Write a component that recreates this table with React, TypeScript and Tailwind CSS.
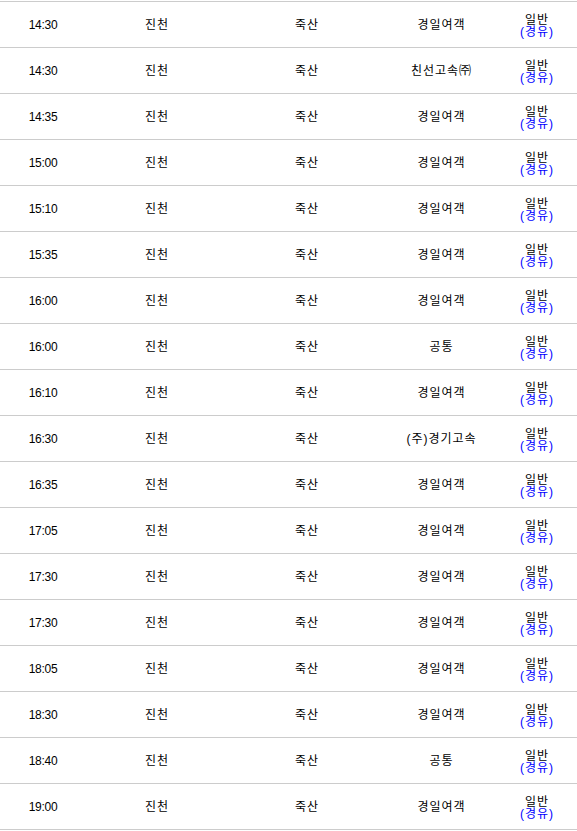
import React from "react";

const rows: [string, string][] = [
  ["14:30", "경일여객"],
  ["14:30", "친선고속㈜"],
  ["14:35", "경일여객"],
  ["15:00", "경일여객"],
  ["15:10", "경일여객"],
  ["15:35", "경일여객"],
  ["16:00", "경일여객"],
  ["16:00", "공통"],
  ["16:10", "경일여객"],
  ["16:30", "(주)경기고속"],
  ["16:35", "경일여객"],
  ["17:05", "경일여객"],
  ["17:30", "경일여객"],
  ["17:30", "경일여객"],
  ["18:05", "경일여객"],
  ["18:30", "경일여객"],
  ["18:40", "공통"],
  ["19:00", "경일여객"],
];

export default function App() {
  return (
    <div
      className="w-[577px] bg-white text-[12px] text-black pt-[1px]"
      style={{ fontFamily: '"Liberation Sans", "Noto Sans CJK KR", sans-serif' }}
    >
      <div className="border-t border-[#cccccc]">
        {rows.map(([t, c], i) => (
          <div
            key={i}
            className="grid grid-cols-[86px_142px_158px_111px_80px] h-[46px] border-b border-[#cccccc] items-center text-center"
          >
            <div className="tracking-[-0.3px]">{t}</div>
            <div className="tracking-[1px]">진천</div>
            <div className="tracking-[1px]">죽산</div>
            <div className="tracking-[1px]">{c}</div>
            <div className="flex flex-col items-center leading-[12px] pt-[3px] tracking-[1px]">
              <span>일반</span>
              <span className="text-[#0000ff]">(경유)</span>
            </div>
          </div>
        ))}
      </div>
    </div>
  );
}
